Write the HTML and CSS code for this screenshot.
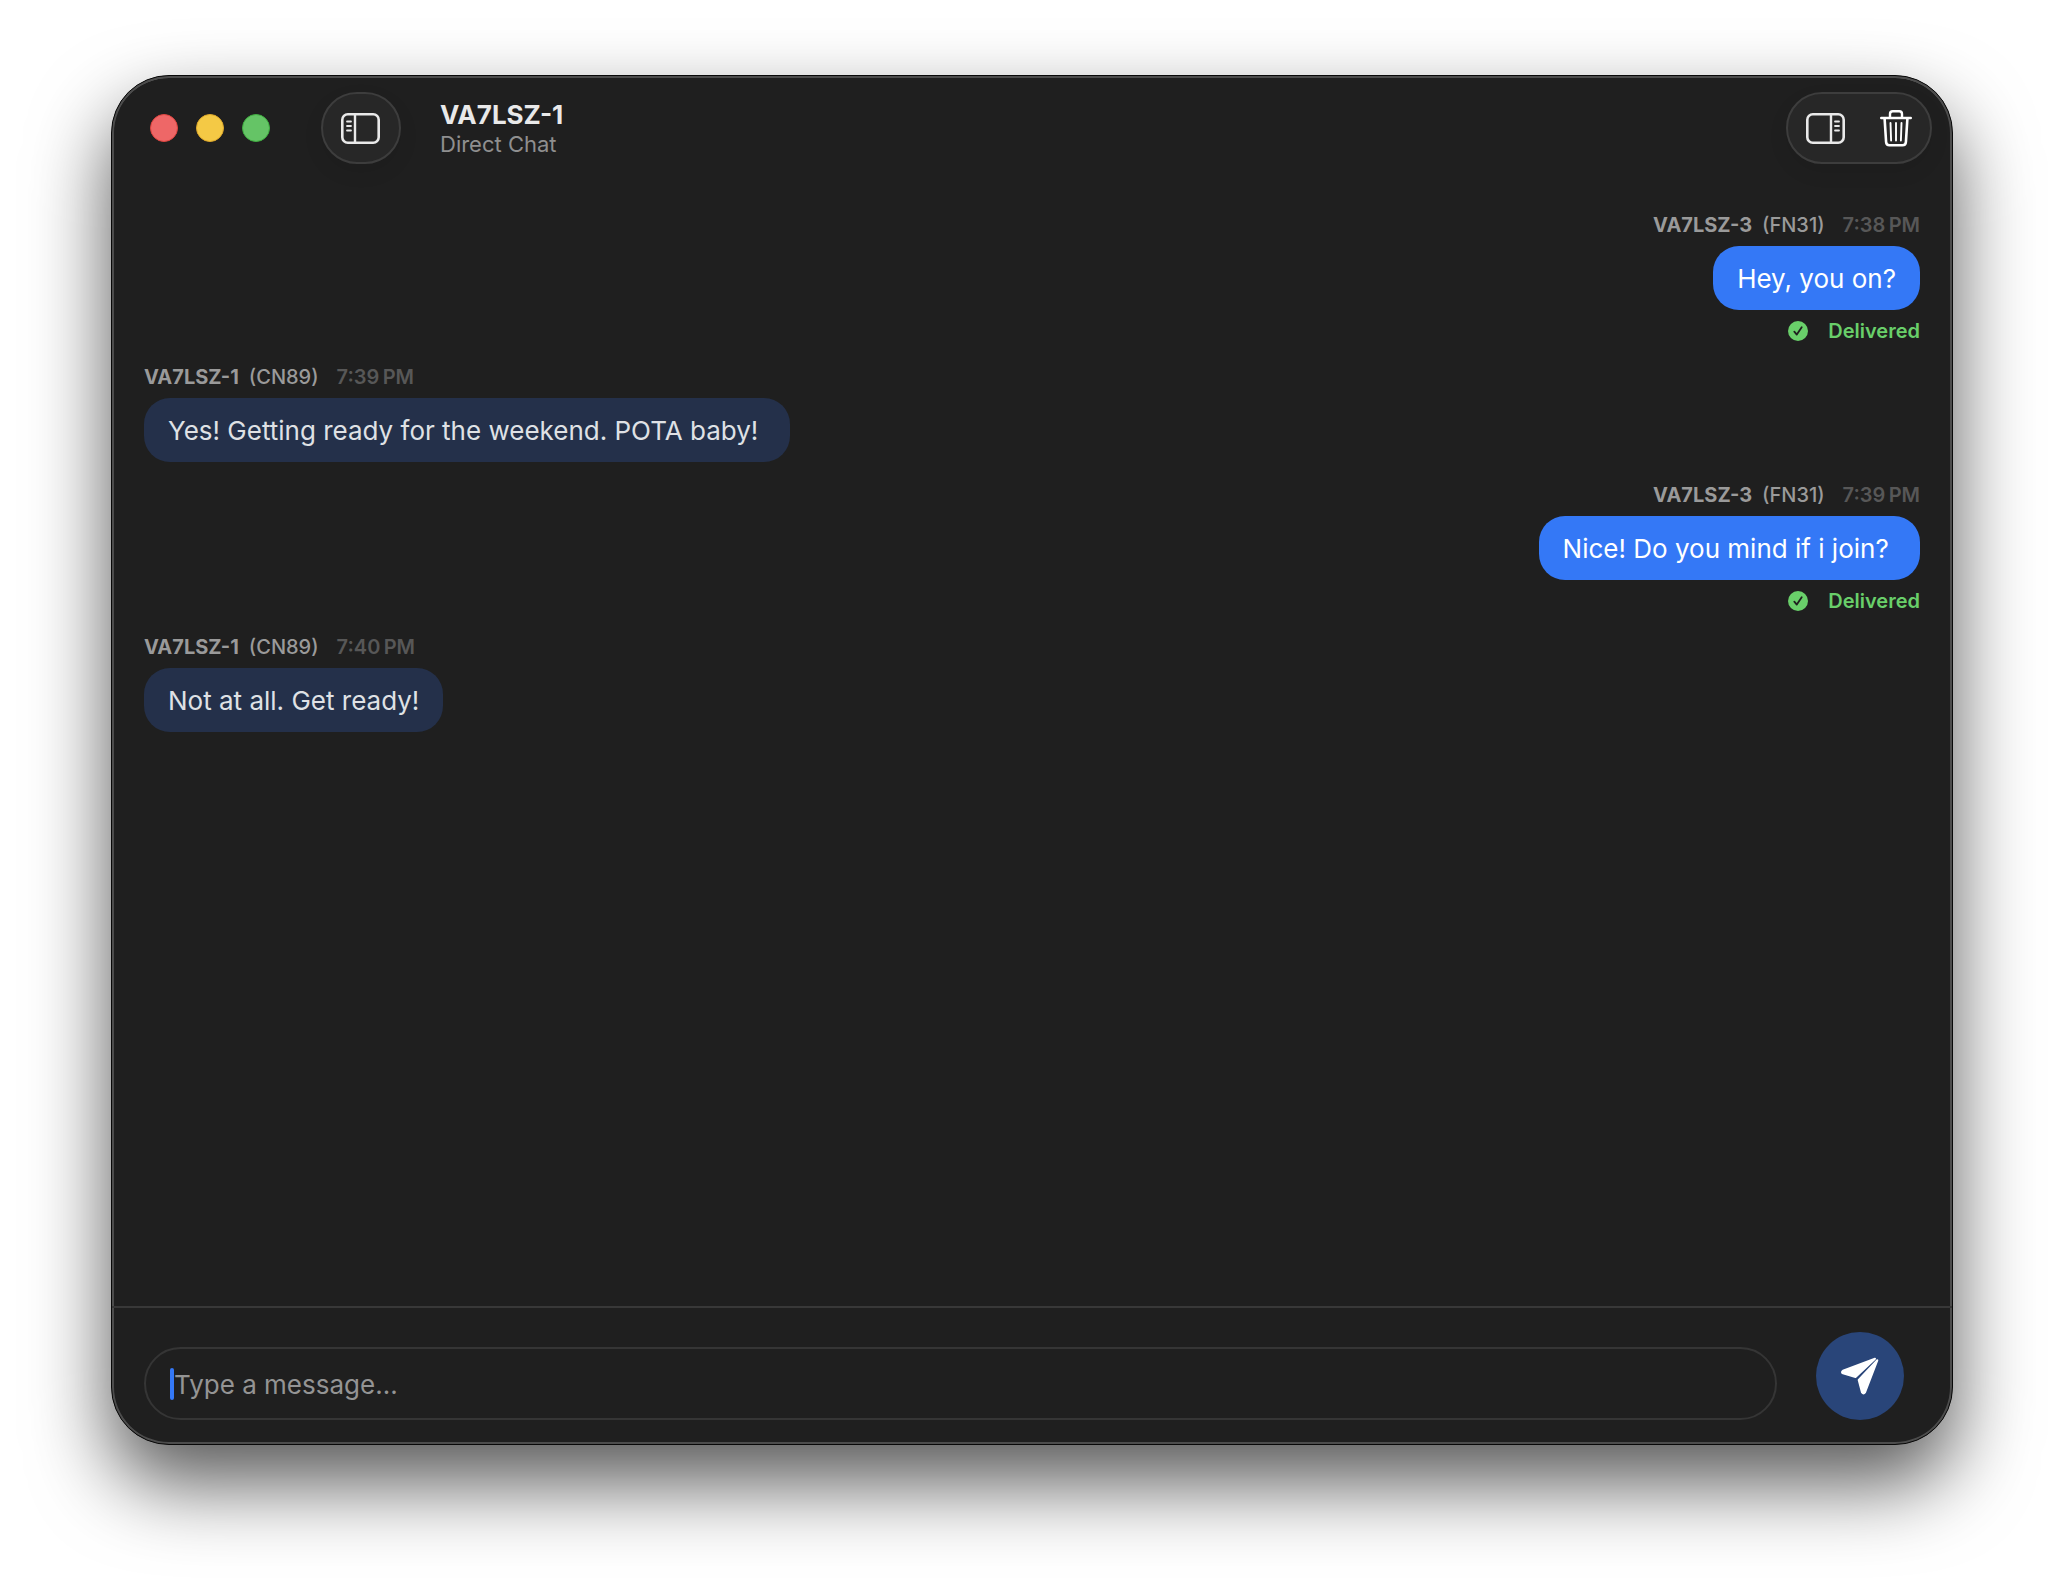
FILE: index.html
```html
<!DOCTYPE html>
<html lang="en">
  <head>
    <meta charset="UTF-8" />
    <meta name="viewport" content="width=device-width, initial-scale=1.0" />
    <title>VA7LSZ-1</title>
    <link rel="stylesheet" href="styles.css">
  </head>
  <body>
    <div class="window">
      <header class="toolbar">
        <div class="lights">
          <button class="light red" aria-label="Close"></button>
          <button class="light yellow" aria-label="Minimize"></button>
          <button class="light green" aria-label="Zoom"></button>
        </div>
        <div class="pill">
          <button class="tool" aria-label="Toggle sidebar">
            <svg width="40" height="32" viewBox="0 -1 40 32" fill="none" stroke="#e9e9e9" stroke-linecap="round">
              <rect x="1.3" y="1.3" width="36.400" height="28.400" rx="5.500" stroke-width="2.600" />
              <path d="M14 2v27" stroke-width="2.4" />
              <path d="M6 8.5h4M6 13h4M6 17.5h4" stroke-width="1.8" />
            </svg>
          </button>
        </div>
        <div class="heading">
          <h1>VA7LSZ-1</h1>
          <p>Direct Chat</p>
        </div>
        <div class="pill actions">
          <button class="tool" aria-label="Toggle inspector">
            <svg width="40" height="32" viewBox="0 -1 40 32" fill="none" stroke="#e9e9e9" stroke-linecap="round">
              <rect x="1.3" y="1.3" width="36.400" height="28.400" rx="5.500" stroke-width="2.600" />
              <path d="M25 2v27" stroke-width="2.4" />
              <path d="M29 8.5h4M29 13h4M29 17.5h4" stroke-width="1.8" />
            </svg>
          </button>
          <button class="tool" aria-label="Delete chat">
            <svg width="32" height="40" viewBox="0 -2 32 40" fill="none" stroke="#fff" stroke-linecap="round" stroke-linejoin="round">
              <path d="M1.2 8h29.6" stroke-width="2.4" />
              <path d="M10 7.500V4Q10 1.300 12.700 1.300h6.600Q22 1.300 22 4V7.500" stroke-width="2.4" />
              <path d="M4.600 8.500l1.500 23.500Q6.300 35.300 9.500 35.300h13Q25.700 35.300 25.900 32L27.400 8.500" stroke-width="2.6" />
              <path d="M10.500 13l.6 17.500M16 13V30.500M21.500 13L20.900 30.500" stroke-width="1.900" />
            </svg>
          </button>
        </div>
      </header>

      <main class="messages">
        <article class="message sent">
          <div class="meta"><b>VA7LSZ-3</b> <span>(FN31)</span> <time>7:38&#8201;PM</time></div>
          <p class="bubble">Hey, you on?</p>
          <div class="status">
            <svg width="20" height="20" viewBox="0 0 20 20">
              <circle cx="10" cy="10" r="10" fill="#69cf6a" />
              <path d="M6.300 10.600l2.500 3 4.900-7.400" fill="none" stroke="#1f1f1f" stroke-width="1.800" stroke-linecap="round" stroke-linejoin="round" />
            </svg>
            <span>Delivered</span>
          </div>
        </article>

        <article class="message">
          <div class="meta"><b>VA7LSZ-1</b> <span>(CN89)</span> <time>7:39&#8201;PM</time></div>
          <p class="bubble">Yes! Getting ready for the weekend. POTA baby! </p>
        </article>

        <article class="message sent">
          <div class="meta"><b>VA7LSZ-3</b> <span>(FN31)</span> <time>7:39&#8201;PM</time></div>
          <p class="bubble">Nice! Do you mind if i join? </p>
          <div class="status">
            <svg width="20" height="20" viewBox="0 0 20 20">
              <circle cx="10" cy="10" r="10" fill="#69cf6a" />
              <path d="M6.300 10.600l2.500 3 4.900-7.400" fill="none" stroke="#1f1f1f" stroke-width="1.800" stroke-linecap="round" stroke-linejoin="round" />
            </svg>
            <span>Delivered</span>
          </div>
        </article>

        <article class="message">
          <div class="meta"><b>VA7LSZ-1</b> <span>(CN89)</span> <time>7:40&#8201;PM</time></div>
          <p class="bubble">Not at all. Get ready!</p>
        </article>
      </main>

      <form class="composer">
        <label class="field">
          <span class="caret"></span>
          <input type="text" placeholder="Type a message..." aria-label="Message" />
        </label>
        <button class="send" type="button" aria-label="Send">
          <svg width="38" height="38" viewBox="0 0 38 38" fill="#fff" stroke="#fff" stroke-width="2" stroke-linejoin="round">
            <path d="M34 1.800L2 13.800Q0 15.300 2 16.300L14.500 20Z" />
            <path d="M36.300 3.300L24 35.500Q22.500 37.500 21 35.500L17.700 23Z" />
          </svg>
        </button>
      </form>
    </div>
  </body>
</html>
```
FILE: styles.css
```css
* {
  box-sizing: border-box;
}
body {
  display: flex;
  min-height: 100vh;
  margin: 0;
  padding: 75px 111px 147px;
  background: #fff;
  font-family: Inter, "Liberation Sans", sans-serif;
}
h1,
p {
  margin: 0;
}
button {
  padding: 0;
  border: none;
  background: none;
  cursor: pointer;
}
svg {
  display: block;
}
.window {
  display: flex;
  flex: 1;
  flex-direction: column;
  border: 1px solid #080808;
  border-radius: 58px;
  background: #1f1f1f;
  box-shadow: inset 0 0 0 2px #4c4c4c, inset 0 1px 0 1px #6c6c6c,
    0 38px 80px rgba(0, 0, 0, 0.66);
}

/* toolbar */
.toolbar {
  display: flex;
  align-items: center;
  padding: 16px 20px 16px 38px;
}
.lights {
  display: flex;
  gap: 18px;
  margin-right: 51px;
}
.light {
  width: 28px;
  height: 28px;
  border: 1px solid;
  border-radius: 50%;
}
.red {
  border-color: #e0443f;
  background: #ee6767;
}
.yellow {
  border-color: #dfa92a;
  background: #f4c945;
}
.green {
  border-color: #3fae40;
  background: #65c466;
}
.pill {
  display: flex;
  align-items: center;
  gap: 34px;
  height: 72px;
  padding: 0 18px;
  border: 2px solid #3d3d3d;
  border-radius: 36px;
  background: #272727;
  box-shadow: 0 8px 20px rgba(0, 0, 0, 0.08);
}
.actions {
  margin-left: auto;
}
.heading {
  margin-left: 39px;
  padding-top: 2px;
}
.heading h1 {
  color: #e9e9e9;
  font-size: 26px;
  font-weight: 700;
  line-height: 30px;
}
.heading p {
  color: #8f8f8f;
  font-size: 22px;
  line-height: 28px;
}

/* chat */
.messages {
  display: flex;
  flex: 1;
  flex-direction: column;
  gap: 20px;
  padding: 32px;
}
.message {
  display: flex;
  flex-direction: column;
  align-items: flex-start;
  gap: 8px;
}
.sent {
  align-items: flex-end;
}
.meta {
  display: flex;
  gap: 10px;
  color: #9a9a9a;
  font-size: 20px;
  font-weight: 500;
  line-height: 26px;
}
.meta b {
  font-weight: 700;
}
.meta time {
  margin-left: 8px;
  color: #575757;
  font-weight: 600;
}
.bubble {
  padding: 17px 24px 15px;
  border-radius: 26px;
  background: #24304a;
  color: #dfe1e5;
  font-size: 26px;
  line-height: 32px;
  white-space: pre-wrap;
}
.sent .bubble {
  background: #3478f6;
  color: #fff;
}
.status {
  display: flex;
  align-items: center;
  gap: 20px;
  color: #69cf6a;
  font-size: 20px;
  font-weight: 600;
  line-height: 26px;
}

/* message box */
.composer {
  display: flex;
  align-items: flex-end;
  gap: 39px;
  padding: 24px 48px 24px 32px;
  border-top: 2px solid #383838;
}
.field {
  display: flex;
  flex: 1;
  align-items: center;
  height: 73px;
  padding: 0 24px;
  border: 2px solid #353535;
  border-radius: 37px;
}
.caret {
  width: 4px;
  height: 32px;
  border-radius: 2px;
  background: #3478f6;
}
.field input {
  flex: 1;
  padding: 2px 0 0;
  border: none;
  outline: none;
  background: none;
  color: #dfe1e5;
  font: 26px/32px Inter, "Liberation Sans", sans-serif;
}
.field input::placeholder {
  color: #949494;
}
.send {
  display: grid;
  place-items: center;
  width: 88px;
  height: 88px;
  border-radius: 50%;
  background: #294579;
}
```
